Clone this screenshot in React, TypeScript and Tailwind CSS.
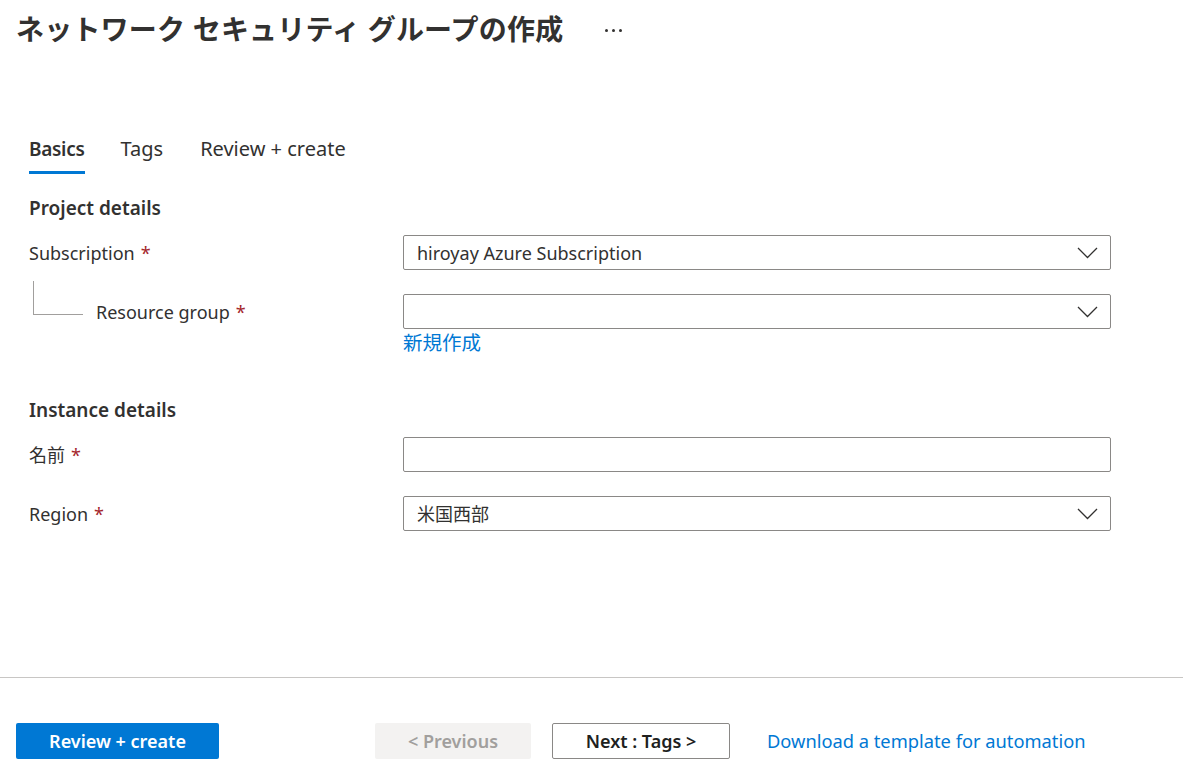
import React from 'react';

const FONT = '[font-family:"Noto_Sans","Noto_Sans_CJK_JP",sans-serif]';

const Chevron: React.FC = () => (
  <svg width="21" height="12" viewBox="0 0 21 12" fill="none" className="shrink-0">
    <path d="M1 1 L10.5 10.5 L20 1" stroke="#323130" strokeWidth="1.3" />
  </svg>
);

const Req: React.FC = () => <span className="ml-[6px] text-[#a4262c]">*</span>;

const Field: React.FC<{ value?: string; dropdown?: boolean }> = ({ value, dropdown }) => (
  <div className="flex h-[35px] w-[708px] items-center justify-between rounded-[2px] border border-[#8a8886] bg-white pl-[13px] pr-[12px]">
    <span className="text-[18px] leading-[24px] text-[#323130]">{value}</span>
    {dropdown && <Chevron />}
  </div>
);

const App: React.FC = () => {
  return (
    <div className={`flex h-[779px] w-full flex-col bg-white text-[#323130] ${FONT}`}>
      <div className="flex-1 px-4">
        <div className="flex items-center pt-[9px]">
          <h1 className="text-[28px] font-bold leading-[40px] tracking-[0.2px] text-[#323130]">
            ネットワーク セキュリティ グループの作成
          </h1>
          <span className="ml-[42px] flex gap-[4px] pt-[2px]">
            <span className="h-[3px] w-[3px] rounded-full bg-[#323130]" />
            <span className="h-[3px] w-[3px] rounded-full bg-[#323130]" />
            <span className="h-[3px] w-[3px] rounded-full bg-[#323130]" />
          </span>
        </div>

        <div className="px-[13px]">
          <div className="mt-[82px] flex gap-[36px] leading-[24px]">
            <div className="flex flex-col">
              <span className="pt-[6px] pb-[10px] text-[19px] font-semibold tracking-[-0.3px]">Basics</span>
              <span className="h-[3px] w-full bg-[#0078d4]" />
            </div>
            <span className="pt-[6px] text-[20px]">Tags</span>
            <span className="ml-[1px] pt-[6px] text-[20px]">Review + create</span>
          </div>

          <h2 className="mt-[22px] text-[19px] font-semibold leading-[24px]">Project details</h2>

          <div className="mt-[15px] flex items-center">
            <div className="w-[374px] text-[18px] leading-[24px]">
              Subscription<Req />
            </div>
            <Field value="hiroyay Azure Subscription" dropdown />
          </div>

          <div className="mt-[24px] flex items-center">
            <div className="flex w-[374px] items-start">
              <div className="ml-[4px] mt-[-19px] h-[34px] w-[50px] border-b border-l border-[#a19f9d]" />
              <span className="ml-[13px] text-[18px] leading-[24px]">
                Resource group<Req />
              </span>
            </div>
            <Field dropdown />
          </div>
          <div className="ml-[374px] mt-[2px] text-[19.5px] leading-[24px] text-[#0078d4]">新規作成</div>

          <h2 className="mt-[43px] text-[19px] font-semibold leading-[24px]">Instance details</h2>

          <div className="mt-[15px] flex items-center">
            <div className="w-[374px] text-[18px] leading-[24px]">
              名前<Req />
            </div>
            <Field />
          </div>

          <div className="mt-[24px] flex items-center">
            <div className="w-[374px] text-[18px] leading-[24px]">
              Region<Req />
            </div>
            <Field value="米国西部" dropdown />
          </div>
        </div>
      </div>

      <div className="flex items-center border-t border-[#c8c6c4] px-4 pt-[45px] pb-[20px]">
        <button className="h-[36px] w-[203px] rounded-[2px] bg-[#0078d4] text-[18px] font-semibold text-white">
          Review + create
        </button>
        <button className="ml-[156px] h-[36px] w-[156px] rounded-[2px] bg-[#f3f2f1] text-[18px] font-semibold text-[#a19f9d]">
          &lt; Previous
        </button>
        <button className="ml-[21px] h-[36px] w-[178px] rounded-[2px] border border-[#8a8886] bg-white text-[18px] font-semibold text-[#201f1e]">
          Next : Tags &gt;
        </button>
        <a className="ml-[37px] text-[18.3px] leading-[24px] text-[#0078d4]">Download a template for automation</a>
      </div>
    </div>
  );
};

export default App;
